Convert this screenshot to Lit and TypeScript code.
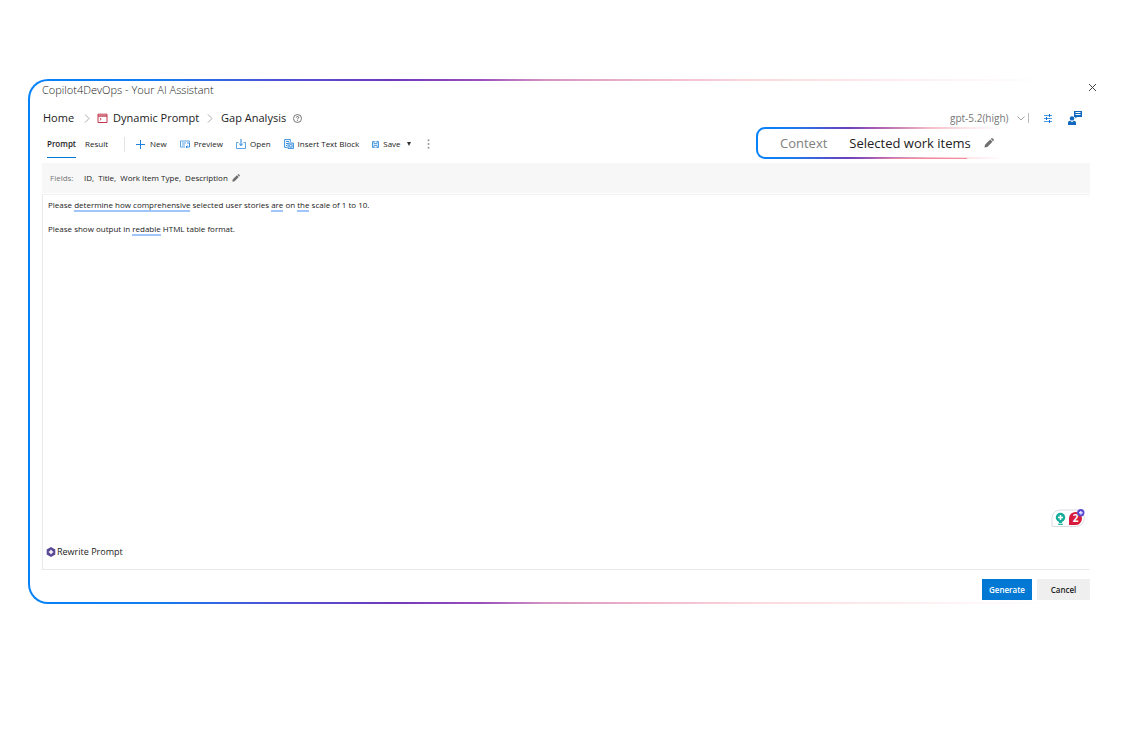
import { LitElement, html, css, svg } from "lit";
import { customElement } from "lit/decorators.js";

const pencil = svg`<path d="M.5 11.500l.7-3.500L7.400 1.800l2.800 2.800L4 10.800z M8.200 1.200l.9-.9c.3-.3.7-.3 1 0l1.600 1.600c.3.3.3.7 0 1l-.9.9z" fill="#707070"/>`;

@customElement("app-root")
export class AppRoot extends LitElement {
  static styles = css`
    :host {
      display: flex;
      flex-direction: column;
      box-sizing: border-box;
      min-height: 100vh;
      padding: 79px 28px 126px;
      background: #fff;
      color: #222;
      font-family: "Open Sans", "Noto Sans", sans-serif;
      font-size: 8px;
      line-height: 12px;
    }
    * { box-sizing: border-box; }
    svg { display: block; flex: none; }
    button, select { font: inherit; color: inherit; border: 0; background: none; padding: 0; margin: 0; }
    a { color: inherit; text-decoration: none; }
    .frame {
      flex: 1;
      display: flex;
      flex-direction: column;
      border: 2px solid transparent;
      border-radius: 20px;
      padding: 0 14px 2px 12px;
      background:
        linear-gradient(#fff, #fff) padding-box,
        linear-gradient(90deg, #0582fa 0%, #147cf0 12%, #4a55d8 22%, #7038bc 34%, #9a50bc 42%, #d394c4 48%, #f0b8cc 58%, #fbdade 68%, #fdecee 80%, #fff 95%) border-box;
    }
    .title { display: flex; justify-content: space-between; height: 28px; }
    h1 { margin: 0; padding-top: 1px; font-size: 11px; line-height: 16px; font-weight: 300; color: #222; }
    .close { width: 9px; height: 9px; margin: 2px -7px 0 0; }
    .crumbs { display: flex; align-items: center; height: 18px; font-size: 11px; padding-left: 1px; }
    nav { display: flex; align-items: center; flex: 1; }
    .sep { margin: 0 7px 0 10px; }
    .sep2 { margin: 0 8px; }
    .app { display: flex; align-items: center; gap: 5px; }
    .help { margin-left: 7px; }
    .model { display: flex; align-items: center; color: #767676; font-size: 10px; }
    .divider { width: 1px; height: 10px; background: #bbb; margin-left: 3px; }
    select { appearance: none; width: 71px; height: 16px; line-height: 16px; }
    .model svg { margin-left: -4px; pointer-events: none; }
    .sliders { margin: 0 16px 0 15px; }
    .user { margin-right: 8px; }
    .bar { display: flex; align-items: flex-start; height: 36px; }
    .tabs { display: flex; gap: 9px; margin-left: 5px; }
    .tab { height: 31px; padding-top: 3px; border-bottom: 1px solid transparent; }
    .tab.on { font-weight: 600; border-color: #0078d4; }
    .tools { display: flex; align-items: center; height: 34px; margin-left: 16px; gap: 13px; flex: 1; }
    .rule { width: 1px; height: 15px; background: #e4e4e4; margin-right: -2px; }
    .tool { display: flex; align-items: center; gap: 4px; white-space: nowrap; }
    .more { margin-left: 2px; }
    .context {
      display: flex;
      align-items: center;
      height: 32px;
      width: 254px;
      margin-right: 80px;
      padding-left: 22px;
      gap: 22px;
      border: 2px solid transparent;
      border-radius: 9px;
      font-size: 13px;
      white-space: nowrap;
      background:
        linear-gradient(#fff, #fff) padding-box,
        linear-gradient(90deg, transparent 45%, #f58a9c 60%, #f58a9c 83%, transparent 83%) bottom / 100% 1px no-repeat border-box,
        linear-gradient(90deg, #0582fa 0%, #1a7cf0 14%, #6a40bc 36%, #b566b0 50%, #f3bcc8 68%, #fde3e7 82%, #fff 98%) border-box;
    }
    .context .label { color: #808080; }
    .context .value { display: flex; align-items: center; gap: 13px; }
    .fields { display: flex; align-items: center; height: 30px; padding-left: 8px; background: #f7f7f7; }
    .fields .label { color: #767676; width: 34px; }
    .fields button { margin-left: 4px; }
    .editor {
      flex: 1;
      display: flex;
      flex-direction: column;
      margin-top: 1px;
      border: 1px solid #e9e9e9;
      border-top-color: #f0f0f0;
      border-right-color: #fff;
      padding: 4px 4px 11px 5px;
    }
    .text { flex: 1; outline: 0; }
    .text p { margin: 0 0 12px; }
    .mark { border-bottom: 2px solid #a0c5fb; }
    .assist { display: flex; justify-content: flex-end; margin-bottom: 18px; }
    .rewrite { display: flex; align-items: center; gap: 1px; align-self: flex-start; margin-left: -2px; font-size: 9px; }
    .foot { display: flex; justify-content: flex-end; gap: 5px; padding-top: 9px; }
    .foot button { height: 21px; width: 53px; font-weight: 600; background: #efefef; }
    .foot .primary { width: 50px; background: #0078d4; color: #fff; }
  `;

  render() {
    return html`
      <main class="frame">
        <header class="title">
          <h1>Copilot4DevOps - Your AI Assistant</h1>
          <button class="close" aria-label="Close">
            <svg width="9" height="9" viewBox="0 0 9 9"><path d="M1 1l7 7M8 1L1 8" stroke="#444" fill="none"/></svg>
          </button>
        </header>
        <div class="crumbs">
          <nav aria-label="Breadcrumb">
            <a href="#">Home</a>
            <svg class="sep" width="6" height="9" viewBox="0 0 6 9"><path d="M1 .5l4 4-4 4" fill="none" stroke="#aaa"/></svg>
            <a class="app" href="#">
              <svg width="11" height="11" viewBox="0 0 11 11"><path d="M1 1.2h9v8.3H1z" fill="#fff" stroke="#c0364b"/><path d="M1 3h9" stroke="#c0364b" stroke-width="1.4"/><path d="M2.8 5l1.4 1.2-1.4 1.2" fill="none" stroke="#c0364b" stroke-width=".9"/></svg>
              Dynamic Prompt</a>
            <svg class="sep2" width="6" height="9" viewBox="0 0 6 9"><path d="M1 .5l4 4-4 4" fill="none" stroke="#aaa"/></svg>
            <span>Gap Analysis</span>
            <svg class="help" width="9" height="9" viewBox="0 0 9 9"><circle cx="4.5" cy="4.5" r="4" fill="none" stroke="#555" stroke-width=".8"/><path d="M3.3 3.6c0-1.6 2.5-1.5 2.4 0 0 .8-1.2.9-1.2 1.8M4.5 6.2v.9" fill="none" stroke="#444" stroke-width=".8"/></svg>
          </nav>
          <div class="model">
            <select aria-label="Model"><option>gpt-5.2(high)</option></select>
            <svg width="8" height="5" viewBox="0 0 8 5"><path d="M.5.5L4 4 7.5.5" fill="none" stroke="#999" stroke-width=".9"/></svg>
            <span class="divider"></span>
          </div>
          <button class="sliders" aria-label="Settings">
            <svg width="8" height="9" viewBox="0 0 8 9"><path d="M0 1.5h8M0 4.5h8M0 7.5h8" stroke="#4b9be0"/><path d="M5.5 0v3M2.5 3v3M5.5 6v3" stroke="#1273cf"/></svg>
          </button>
          <button class="user" aria-label="Feedback">
            <svg width="14" height="14" viewBox="0 0 14 14" fill="#1068c0"><path d="M6 0h8v6H9L7.3 7.6V6H6z"/><path d="M7.500 1.500h5M7.500 3.500h5" stroke="#fff"/><circle cx="4" cy="7.4" r="2.2"/><path d="M0 14v-2.3c0-1.3 1-2 2.2-2L4 11.2l1.8-1.5c1.2 0 2.2.7 2.2 2V14z"/></svg>
          </button>
        </div>
        <div class="bar">
          <div class="tabs" role="tablist">
            <button class="tab on" role="tab" aria-selected="true">Prompt</button>
            <button class="tab" role="tab" aria-selected="false">Result</button>
          </div>
          <div class="tools">
            <span class="rule"></span>
            <button class="tool"><svg width="10" height="9" viewBox="0 0 10 9"><path d="M4.500 0v9M0 4.500h9" stroke="#1f82dc"/></svg>New</button>
            <button class="tool"><svg width="10" height="8" viewBox="0 0 10 8"><path d="M5 7H.5V1h9v1.5M2 3h4M2 5h3" fill="none" stroke="#4b9be0" stroke-width=".9"/><path d="M9.5 3v4H6M7.4 5.6L6 7l1.4 1M7 3h2.5" fill="none" stroke="#1f82dc" stroke-width=".9"/></svg>Preview</button>
            <button class="tool"><svg width="10" height="10" viewBox="0 0 10 10"><path d="M2.5 3.5h-2v6h9v-6h-2" fill="none" stroke="#4b9be0" stroke-width=".9"/><path d="M5 0v6.5M3.2 4.8L5 6.5l1.8-1.7" fill="none" stroke="#1f82dc"/></svg>Open</button>
            <button class="tool"><svg width="10" height="10" viewBox="0 0 10 10"><path d="M.6.6h5.8v2.2M.6.6v7.800h2.800M2 2.500h3M2 4.500h2M2 6.500h1" fill="none" stroke="#3b92de"/><path d="M4 4h5.500v5.500H4z" fill="#b8d9f5" stroke="#2a85d8" stroke-width=".8"/><circle cx="6.800" cy="6.800" r="1.300" fill="#fff" stroke="#1f82dc" stroke-width=".8"/></svg>Insert Text Block</button>
            <button class="tool"><svg width="7" height="7" viewBox="0 0 7 7"><path d="M.5.5h6v6h-6z" fill="#d5e9fa" stroke="#4b9be0"/><path d="M2 .5v2h3v-2M2 6.5v-2h3v2" fill="#fff" stroke="#3b92de" stroke-width=".8"/></svg>Save
              <svg width="7" height="4" viewBox="0 0 7 4"><path d="M2 0h4L4 4z" fill="#333"/></svg></button>
            <button class="tool more" aria-label="More"><svg width="3" height="10" viewBox="0 0 3 10" fill="#999"><circle cx="1.500" cy="1.200" r="1"/><circle cx="1.500" cy="5" r="1"/><circle cx="1.500" cy="8.800" r="1"/></svg></button>
          </div>
          <div class="context">
            <span class="label">Context</span>
            <span class="value">Selected work items
              <button aria-label="Edit context"><svg width="10" height="10" viewBox="0 0 12 12">${pencil}</svg></button></span>
          </div>
        </div>
        <div class="fields">
          <span class="label">Fields:</span>
          <span>ID,&nbsp; Title,&nbsp; Work Item Type,&nbsp; Description</span>
          <button aria-label="Edit fields"><svg width="8" height="8" viewBox="0 0 12 12">${pencil}</svg></button>
        </div>
        <section class="editor">
          <div class="text" contenteditable="true" role="textbox" aria-multiline="true" aria-label="Prompt text" spellcheck="false">
            <p>Please <span class="mark">determine how comprehensive</span> selected user stories <span class="mark">are</span> on <span class="mark">the</span> scale of 1 to 10.</p>
            <p>Please show output in <span class="mark">redable</span> HTML table format.</p>
          </div>
          <div class="assist">
            <svg width="34" height="20" viewBox="0 0 34 20" role="img" aria-label="2 writing suggestions"><path d="M1 18.500V10a8 8 0 0 1 8-8h16a8 8 0 0 1 0 16.500z" fill="#fff" stroke="#dcdce4"/><circle cx="9.500" cy="9.500" r="4.700" fill="#14ab98"/><path d="M8 13h3v2H8z" fill="#14ab98"/><path d="M7.200 16.300h4.600" stroke="#14ab98" stroke-width="1.200"/><path d="M9.500 7v5M7 9.500h5" stroke="#fff" stroke-width="1.600"/><path d="M18 17v-7a6.500 6.500 0 1 1 6.500 7z" fill="#d81b3c"/><text x="24.500" y="14" text-anchor="middle" font-size="10" font-weight="700" fill="#fff">2</text><circle cx="29.800" cy="4.800" r="3.700" fill="#5b4bd0"/><path d="M29.800 3v3.600M28 4.800h3.600" stroke="#e2dcff" stroke-width="1.400"/></svg>
          </div>
          <button class="rewrite"><svg width="10" height="10" viewBox="0 0 10 10"><path d="M5 0l4.300 2.500v5L5 10 .7 7.500v-5z" fill="#594794"/><path d="M5 2.800l.7 1.500 1.500.7-1.500.7L5 7.200l-.7-1.500L2.800 5l1.500-.7z" fill="#fff" stroke="#fff" stroke-width=".6"/></svg>Rewrite Prompt</button>
        </section>
        <footer class="foot">
          <button class="primary">Generate</button>
          <button>Cancel</button>
        </footer>
      </main>
    `;
  }
}
